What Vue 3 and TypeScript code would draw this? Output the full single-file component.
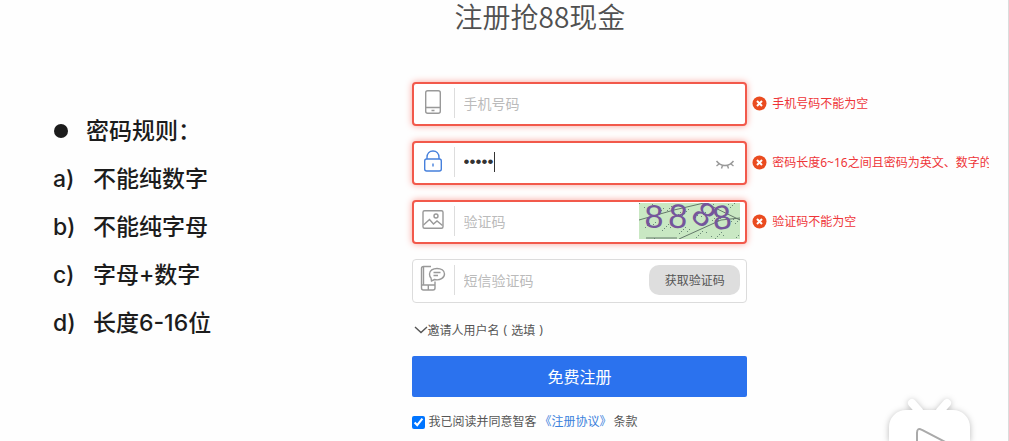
<script setup lang="ts">
import { ref } from 'vue'

interface Rule {
  mark: string
  text: string
}

const rules: Rule[] = [
  { mark: 'a)', text: '不能纯数字' },
  { mark: 'b)', text: '不能纯字母' },
  { mark: 'c)', text: '字母+数字' },
  { mark: 'd)', text: '长度6-16位' },
]

const phone = ref('')
const password = ref('12345')
const captcha = ref('')
const smsCode = ref('')
const agreed = ref(true)

const specks = Array.from({ length: 70 }, (_, i) => ({
  x: (i * 37 + (i % 5) * 11) % 101,
  y: (i * 23 + (i % 7) * 5) % 36,
}))
</script>

<template>
  <main class="page">
    <section class="rules">
      <h2 class="rules-title"><span class="bullet"></span>密码规则：</h2>
      <ol class="rule-list">
        <li v-for="rule in rules" :key="rule.mark">
          <span class="mark">{{ rule.mark }}</span>{{ rule.text }}
        </li>
      </ol>
    </section>

    <form class="signup" @submit.prevent>
      <h1 class="title">注册抢88现金</h1>

      <div class="row">
        <div class="field invalid">
          <label class="icon" for="phone" aria-label="手机号码">
            <svg width="28" height="28" viewBox="0 0 28 28">
              <rect x="6.7" y="2.7" width="14.6" height="22.6" rx="2" />
              <path d="M7 19.5H21M12.5 22.5H15.5" />
            </svg>
          </label>
          <input id="phone" v-model="phone" type="tel" placeholder="手机号码" />
        </div>
        <p class="error">
          <svg class="cross" width="15" height="15" viewBox="0 0 15 15"><circle cx="7.5" cy="7.5" r="7" /><path d="M5 5L10 10M10 5L5 10" /></svg>
          <span>手机号码不能为空</span>
        </p>
      </div>

      <div class="row">
        <div class="field invalid">
          <label class="icon active" for="password" aria-label="密码">
            <svg width="28" height="28" viewBox="0 0 28 28">
              <rect x="5.7" y="12" width="16.6" height="12" rx="2" />
              <path d="M8 12V10.5C8 6.5 10.5 4 14 4S20 6.5 20 10.5V12M14 16.5V19.5" />
            </svg>
          </label>
          <input id="password" v-model="password" class="secret" type="password" />
          <span class="caret"></span>
          <button class="eye" type="button" aria-label="显示密码">
            <svg width="20" height="12" viewBox="0 0 20 12">
              <path d="M1.5 2C6 8 14 8 18.5 2M4 5L1.5 7M7.5 6.5L6.5 9.5M12.5 6.5L13.5 9.5M16 5L18.5 7" />
            </svg>
          </button>
        </div>
        <p class="error">
          <svg class="cross" width="15" height="15" viewBox="0 0 15 15"><circle cx="7.5" cy="7.5" r="7" /><path d="M5 5L10 10M10 5L5 10" /></svg>
          <span>密码长度6~16之间且密码为英文、数字的</span>
        </p>
      </div>

      <div class="row">
        <div class="field invalid">
          <label class="icon" for="captcha" aria-label="验证码">
            <svg width="28" height="28" viewBox="0 0 28 28">
              <rect x="4" y="4.7" width="20" height="17.6" rx="1.5" />
              <circle cx="17" cy="10" r="2" />
              <path d="M4.5 19L10.5 13.5L14.5 18L18 15L23.5 19.5" />
            </svg>
          </label>
          <input id="captcha" v-model="captcha" type="text" placeholder="验证码" />
          <svg class="captcha" width="101" height="36" viewBox="0 0 101 36">
            <rect width="101" height="36" fill="#c9e8c3" />
            <rect v-for="(s, i) in specks" :key="i" :x="s.x" :y="s.y" width="1" height="1" fill="#6b8a78" />
            <path d="M0 17L35 7L65 0M40 36L82 17L101 15M7 35L38 35M70 2L101 17" fill="none" stroke="#64786a" />
            <g class="digits">
              <text x="15" y="25">8</text>
              <text x="39" y="25" transform="rotate(4 39 13)">8</text>
              <text x="65" y="23" transform="rotate(38 65 11)">8</text>
              <text x="83" y="26" transform="rotate(-6 83 14)">8</text>
            </g>
          </svg>
        </div>
        <p class="error">
          <svg class="cross" width="15" height="15" viewBox="0 0 15 15"><circle cx="7.5" cy="7.5" r="7" /><path d="M5 5L10 10M10 5L5 10" /></svg>
          <span>验证码不能为空</span>
        </p>
      </div>

      <div class="row">
        <div class="field">
          <label class="icon" for="sms" aria-label="短信验证码">
            <svg width="28" height="28" viewBox="0 0 28 28">
              <path d="M12 1.5H4.5Q2.5 1.5 2.5 3.5V23Q2.5 25 4.5 25H14Q16 25 16 23V16.5M2.5 20H16M9.3 20V25M4.5 1.5V20" />
              <path d="M12 13L12.5 16L15.5 14.5C21 16 25.5 12.5 25.5 9C25.5 5.5 22 3.5 18 3.5S10.5 5.5 10.5 9Q10.5 11.5 12 13ZM14.5 7.5H21.5M14.5 10.5H19" />
            </svg>
          </label>
          <input id="sms" v-model="smsCode" type="text" placeholder="短信验证码" />
          <button class="send" type="button">获取验证码</button>
        </div>
      </div>

      <div class="row">
        <button class="inviter" type="button">
          <svg width="14" height="8" viewBox="0 0 14 8"><path d="M1 1L7 6.5L13 1" /></svg>
          <span>邀请人用户名</span><span>(</span><span>选填</span><span>)</span>
        </button>
      </div>

      <div class="row">
        <button class="submit" type="submit">免费注册</button>
      </div>

      <div class="terms">
        <input id="agree" v-model="agreed" type="checkbox" />
        <label for="agree">我已阅读并同意智客</label>
        <a href="#">《注册协议》</a>
        <span>条款</span>
      </div>
    </form>

    <svg class="tv" width="110" height="48" viewBox="0 0 110 48">
      <path d="M44 18L37 10M65 18L72 10" stroke="#fff" stroke-width="8" stroke-linecap="round" />
      <rect x="14" y="17" width="81" height="70" rx="17" fill="#fff" />
      <path class="play" d="M42 60V40Q42 34 47 37L80 54" />
    </svg>
  </main>
</template>

<style>
body {
  margin: 0;
  background: #fefefe;
}
</style>

<style scoped>
.page {
  position: relative;
  display: grid;
  grid-template-columns: minmax(0, 412fr) minmax(0, 597fr);
  box-sizing: border-box;
  min-height: 100vh;
  overflow: hidden;
  border-right: 1px solid #dcdcdc;
  color: #555;
  font-family: "Noto Sans", "Noto Sans CJK SC", sans-serif;
}

h1, h2, p, ol {
  margin: 0;
  padding: 0;
}

input, button {
  font-family: inherit;
}

.rules {
  padding: 107px 0 0 53px;
  color: #1c1c1c;
  font-family: Inter, "Noto Sans CJK SC", sans-serif;
  font-size: 23px;
  font-weight: 500;
  line-height: 48px;
}

.rules-title {
  display: flex;
  align-items: center;
  font-size: inherit;
  font-weight: inherit;
}

.bullet {
  width: 14px;
  height: 14px;
  margin: 0 18px 0 1px;
  border-radius: 50%;
  background: #1c1c1c;
}

.rule-list {
  list-style: none;
}

.rule-list li {
  display: flex;
}

.mark {
  width: 40px;
}

.title {
  padding: 0 0 50px 43px;
  color: #505050;
  font-family: "Noto Sans CJK SC", sans-serif;
  font-size: 28px;
  font-weight: 350;
  line-height: 32px;
}

.row {
  display: grid;
  grid-template-columns: minmax(0, 336fr) minmax(0, 261fr);
  margin-bottom: 15px;
}

.field {
  display: flex;
  align-items: center;
  box-sizing: border-box;
  height: 44px;
  padding: 0 6px 2px;
  border: 1px solid #dcdcdc;
  border-radius: 4px;
  background: #fff;
}

.invalid {
  border: 2px solid #f2594b;
  padding: 0 5px 2px;
  box-shadow: 0 0 7px #f9a59d;
}

.icon {
  display: flex;
  flex: none;
  box-sizing: border-box;
  width: 36px;
  height: 30px;
  margin-right: 9px;
  border-right: 1px solid #ddd;
}

.icon svg, .eye svg, .inviter svg {
  fill: none;
  stroke: #999;
  stroke-width: 1.4;
}

.icon.active svg {
  stroke: #4680dc;
}

.field input {
  flex: 1;
  min-width: 0;
  padding: 0;
  border: 0;
  outline: 0;
  background: none;
  color: #333;
  font-size: 14px;
}

.field input::placeholder {
  color: #bbb;
}

.field .secret {
  flex: none;
  width: 30px;
  font-family: "Liberation Sans", sans-serif;
  font-size: 17px;
}

.caret {
  width: 1px;
  height: 20px;
  background: #333;
}

.eye {
  display: flex;
  margin-left: auto;
  padding: 6px 5px 0;
  border: 0;
  background: none;
}

.captcha {
  flex: none;
}

.digits {
  fill: #75569b;
  font-family: "Liberation Sans", sans-serif;
  font-size: 34px;
  text-anchor: middle;
}

.error {
  display: flex;
  align-items: center;
  min-width: 0;
  margin: 0 19px 0 5px;
  padding-bottom: 2px;
  color: #ee3538;
  font-size: 12px;
  white-space: nowrap;
}

.error span {
  overflow: hidden;
}

.cross {
  flex: none;
  margin-right: 5px;
  fill: #ea4b1f;
  stroke: #fff;
  stroke-width: 2;
}

.cross circle {
  stroke: none;
}

.send {
  flex: none;
  width: 91px;
  height: 30px;
  padding: 0;
  border: 0;
  border-radius: 10px;
  background: #dedede;
  color: #555;
  font-size: 12px;
}

.inviter {
  display: flex;
  align-items: center;
  gap: 4px;
  height: 23px;
  padding: 0 2px;
  border: 0;
  background: none;
  color: #555;
  font-size: 12px;
}

.inviter svg {
  margin-right: -4px;
  stroke: #555;
}

.submit {
  height: 41px;
  padding: 0 0 2px;
  border: 0;
  border-radius: 2px;
  background: #2b72ee;
  color: #fff;
  font-size: 16px;
}

.terms {
  display: flex;
  align-items: center;
  font-size: 12px;
  line-height: 20px;
}

.terms input {
  width: 13px;
  height: 13px;
  margin: 0 4px 0 0;
}

.terms a {
  margin: 0 2px 0 3px;
  color: #3a80dc;
  text-decoration: none;
}

.tv {
  position: absolute;
  right: 23px;
  bottom: 0;
  filter: drop-shadow(0 1px 3px #bbb);
}

.play {
  fill: none;
  stroke: #aaa;
  stroke-width: 2;
}
</style>
